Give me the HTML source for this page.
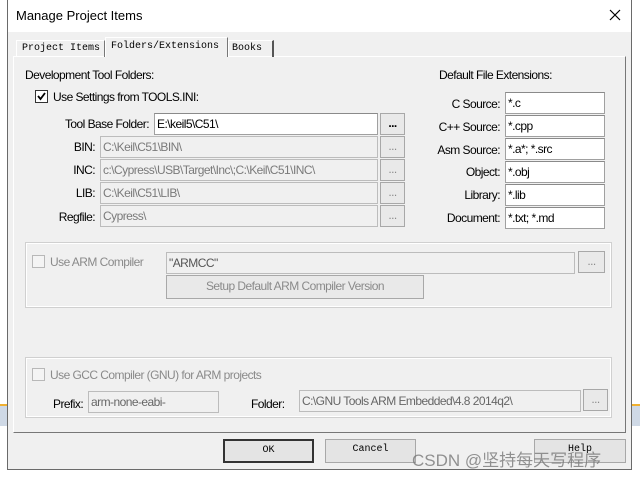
<!DOCTYPE html>
<html><head><style>
*{margin:0;padding:0;box-sizing:border-box}
body{width:640px;height:477px;background:#fff;position:relative;overflow:hidden;font-family:"Liberation Sans",sans-serif;font-size:12px;color:#000;letter-spacing:-0.55px}
.a{position:absolute}
.dlg{left:7px;top:0;width:625px;height:470px;background:#f0f0f0;border:1px solid #6a6a6a}
.tb{left:8px;top:0;width:623px;height:32px;background:#fff}
.in{position:absolute;height:22px;border:1px solid #a0a0a0;border-top-color:#8a8a8a;background:#fff;padding:2px 2px;line-height:16px;white-space:nowrap;overflow:hidden}
.dis{background:#f0f0f0;color:#7a7a7a;border-color:#bcbcbc}
.btn{position:absolute;height:22px;background:#e9e9e9;border:1px solid #a8a8a8;text-align:center;line-height:18px;color:#000;white-space:nowrap}
.lbl{position:absolute;text-align:right;white-space:nowrap;line-height:14px}
.frame{position:absolute;border:1px solid #d0d0d0;box-shadow:inset 0 0 0 1px #fff}
.cb{position:absolute;width:13px;height:13px;border:1px solid #b8b8b8;background:#f4f4f4}
.mono{font-family:"Liberation Mono",monospace;font-size:10px;letter-spacing:0;white-space:nowrap}
.g{color:#8a8a8a}
</style></head><body>
<div class="a" style="left:0;top:404px;width:7px;height:2px;background:#f0b030"></div>
<div class="a" style="left:0;top:406px;width:7px;height:20px;background:#cfd9e6"></div>
<div class="a" style="left:632px;top:404px;width:8px;height:2px;background:#f0b030"></div>
<div class="a" style="left:632px;top:406px;width:8px;height:20px;background:#cfd9e6"></div>
<div class="a dlg"></div>
<div class="a tb"></div>
<div class="a" style="left:16px;top:8px;font-size:13px;letter-spacing:0">Manage Project Items</div>
<svg class="a" style="left:609px;top:9px" width="12" height="12"><path d="M1 1L11 11M11 1L1 11" stroke="#000" stroke-width="1.2"/></svg>
<!-- panel -->
<div class="a" style="left:13px;top:56px;width:613px;height:377px;border:1px solid #fff;border-right-color:#777;border-bottom-color:#777;background:#f0f0f0"></div>
<div class="a mono" style="left:16px;top:40px;width:89px;height:17px;border:1px solid #fff;border-right-color:#777;border-bottom:none;line-height:15px;padding-left:5px">Project Items</div>
<div class="a mono" style="left:105px;top:37px;width:123px;height:20px;border:1px solid #fff;border-right-color:#777;border-bottom:none;background:#f0f0f0;line-height:17px;padding-left:5px">Folders/Extensions</div>
<div class="a mono" style="left:228px;top:40px;width:46px;height:17px;border:1px solid #fff;border-right:2px solid #555;border-bottom:none;line-height:15px;padding-left:3px">Books</div>

<div class="lbl" style="left:25px;top:68px">Development Tool Folders:</div>
<div class="cb" style="left:35px;top:90px;background:#fff;border-color:#333"></div>
<svg class="a" style="left:36px;top:91px" width="11" height="11"><path d="M2 5L4.5 8L9 2" stroke="#000" stroke-width="1.8" fill="none"/></svg>
<div class="lbl" style="left:53px;top:90px">Use Settings from TOOLS.INI:</div>

<div class="lbl" style="right:491px;top:117px">Tool Base Folder:</div>
<div class="in" style="left:154px;top:113px;width:224px">E:\keil5\C51\</div>
<div class="btn" style="left:380px;top:113px;width:25px;font-weight:bold">...</div>
<div class="lbl" style="right:545px;top:140px">BIN:</div>
<div class="in dis" style="left:100px;top:136px;width:278px">C:\Keil\C51\BIN\</div>
<div class="btn g" style="left:380px;top:136px;width:25px">...</div>
<div class="lbl" style="right:545px;top:163px">INC:</div>
<div class="in dis" style="left:100px;top:159px;width:278px">c:\Cypress\USB\Target\Inc\;C:\Keil\C51\INC\</div>
<div class="btn g" style="left:380px;top:159px;width:25px">...</div>
<div class="lbl" style="right:545px;top:186px">LIB:</div>
<div class="in dis" style="left:100px;top:182px;width:278px">C:\Keil\C51\LIB\</div>
<div class="btn g" style="left:380px;top:182px;width:25px">...</div>
<div class="lbl" style="right:545px;top:210px">Regfile:</div>
<div class="in dis" style="left:100px;top:205px;width:278px">Cypress\</div>
<div class="btn g" style="left:380px;top:205px;width:25px">...</div>

<div class="lbl" style="left:439px;top:68px">Default File Extensions:</div>
<div class="lbl" style="right:140px;top:97px">C Source:</div>
<div class="in" style="left:505px;top:92px;width:100px">*.c</div>
<div class="lbl" style="right:140px;top:120px">C++ Source:</div>
<div class="in" style="left:505px;top:115px;width:100px">*.cpp</div>
<div class="lbl" style="right:140px;top:143px">Asm Source:</div>
<div class="in" style="left:505px;top:138px;width:100px">*.a*; *.src</div>
<div class="lbl" style="right:140px;top:165px">Object:</div>
<div class="in" style="left:505px;top:161px;width:100px">*.obj</div>
<div class="lbl" style="right:140px;top:188px">Library:</div>
<div class="in" style="left:505px;top:184px;width:100px">*.lib</div>
<div class="lbl" style="right:140px;top:211px">Document:</div>
<div class="in" style="left:505px;top:207px;width:100px">*.txt; *.md</div>

<div class="frame" style="left:25px;top:242px;width:587px;height:66px"></div>
<div class="cb" style="left:32px;top:255px"></div>
<div class="lbl g" style="left:50px;top:255px">Use ARM Compiler</div>
<div class="in dis" style="left:166px;top:252px;width:409px;color:#555">"ARMCC"</div>
<div class="btn g" style="left:578px;top:251px;width:27px">...</div>
<div class="btn g" style="left:166px;top:275px;width:258px;height:24px;line-height:20px">Setup Default ARM Compiler Version</div>

<div class="frame" style="left:25px;top:357px;width:587px;height:61px"></div>
<div class="cb" style="left:32px;top:368px"></div>
<div class="lbl g" style="left:50px;top:368px">Use GCC Compiler (GNU) for ARM projects</div>
<div class="lbl" style="left:53px;top:397px">Prefix:</div>
<div class="in dis" style="left:88px;top:391px;width:131px;color:#666">arm-none-eabi-</div>
<div class="lbl" style="left:251px;top:397px">Folder:</div>
<div class="in dis" style="left:299px;top:390px;width:282px;color:#666">C:\GNU Tools ARM Embedded\4.8 2014q2\</div>
<div class="btn g" style="left:583px;top:389px;width:25px">...</div>

<div class="btn mono" style="left:223px;top:439px;width:91px;height:24px;border:2px solid #333;line-height:20px;background:#e4e4e4">OK</div>
<div class="btn mono" style="left:325px;top:439px;width:91px;height:24px;line-height:20px;background:#e4e4e4">Cancel</div>
<div class="btn mono" style="left:534px;top:439px;width:92px;height:24px;line-height:20px;background:#e4e4e4">Help</div>
<div class="a" style="left:412px;top:446px;font-family:'Liberation Sans','Noto Sans CJK SC',sans-serif;font-size:17px;color:rgba(120,120,120,0.8);letter-spacing:0">CSDN @坚持每天写程序</div>
</body></html>
